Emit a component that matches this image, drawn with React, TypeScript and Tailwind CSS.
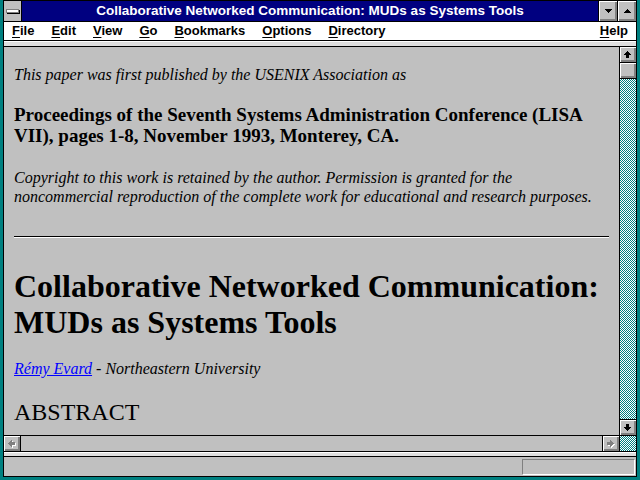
const ARROW = 'M3 0h1v1h1v1h1v1h1v1h-2v3h-3v-3h-2v-1h1v-1h1v-1h1z';
const TRI_DOWN = 'M0 0h7v1h-1v1h-1v1h-1v1h-1v-1h-1v-1h-1v-1h-1z';

const bevel = 'bg-[#c0c0c0] shadow-[inset_1px_1px_0_#ffffff,inset_-1px_-1px_0_#808080,inset_-2px_-2px_0_#808080]';

function Dither({ id }: { id: string }) {
  return (
    <svg width="100%" height="100%" shapeRendering="crispEdges" className="block">
      <defs>
        <pattern id={id} width="2" height="2" patternUnits="userSpaceOnUse">
          <rect width="2" height="2" fill="#008080" />
          <rect width="1" height="1" fill="#ffffff" />
          <rect x="1" y="1" width="1" height="1" fill="#ffffff" />
        </pattern>
      </defs>
      <rect width="100%" height="100%" fill={`url(#${id})`} />
    </svg>
  );
}

function Arrow({ dir, disabled }: { dir: 'up' | 'down' | 'left' | 'right'; disabled?: boolean }) {
  const rot = { up: 0, down: 180, left: 270, right: 90 }[dir];
  return (
    <svg width="8" height="8" viewBox="0 0 8 8" shapeRendering="crispEdges">
      {disabled && (
        <g transform="translate(1 1)">
          <path d={ARROW} fill="#ffffff" transform={`rotate(${rot} 3.5 3.5)`} />
        </g>
      )}
      <path d={ARROW} fill={disabled ? '#808080' : '#000000'} transform={`rotate(${rot} 3.5 3.5)`} />
    </svg>
  );
}

function ScrollButton({ dir, disabled, className = '' }: { dir: 'up' | 'down' | 'left' | 'right'; disabled?: boolean; className?: string }) {
  return (
    <div className={`${bevel} flex items-center justify-center shrink-0 ${className}`}>
      <Arrow dir={dir} disabled={disabled} />
    </div>
  );
}

function MenuItem({ first, rest }: { first: string; rest: string }) {
  return (
    <span className="px-2">
      <span className="underline underline-offset-2">{first}</span>
      {rest}
    </span>
  );
}

export default function App() {
  return (
    <div className="w-[640px] h-[480px] bg-[#008080] px-[3px] pb-[3px] font-['Liberation_Sans',Arial,sans-serif]">
      <div className="h-full flex flex-col border border-black bg-[#c0c0c0]">
        {/* Title bar */}
        <div className="h-[21px] shrink-0 flex border-b border-black">
          <div className="w-[18px] border-r border-black bg-[#c0c0c0] flex items-center justify-center">
            <div className="w-[13px] h-[4px] bg-white border border-[#808080] shadow-[1px_1px_0_#000]" />
          </div>
          <div className="flex-1 bg-[#000080] text-white font-bold text-[13.5px] flex items-center justify-center">
            Collaborative Networked Communication: MUDs as Systems Tools
          </div>
          <div className="w-[19px] border-l border-black">
            <div className={`${bevel} h-full flex items-center justify-center`}>
              <svg width="7" height="4" viewBox="0 0 7 4" shapeRendering="crispEdges">
                <path d={TRI_DOWN} fill="#000" />
              </svg>
            </div>
          </div>
          <div className="w-[19px] border-l border-black">
            <div className={`${bevel} h-full flex items-center justify-center`}>
              <svg width="7" height="4" viewBox="0 0 7 4" shapeRendering="crispEdges">
                <path d={TRI_DOWN} fill="#000" transform="rotate(180 3.5 2)" />
              </svg>
            </div>
          </div>
        </div>

        {/* Menu bar */}
        <div className="h-[19px] shrink-0 bg-white border-b border-black flex items-center text-[13px] font-bold text-black">
          <div className="flex gap-px">
            <MenuItem first="F" rest="ile" />
            <MenuItem first="E" rest="dit" />
            <MenuItem first="V" rest="iew" />
            <MenuItem first="G" rest="o" />
            <MenuItem first="B" rest="ookmarks" />
            <MenuItem first="O" rest="ptions" />
            <MenuItem first="D" rest="irectory" />
          </div>
          <span className="flex-1" />
          <MenuItem first="H" rest="elp" />
        </div>

        <div className="h-[6px] shrink-0 bg-[#dfdfdf] border-t border-t-white border-b border-b-black" />

        {/* Document + vertical scrollbar */}
        <div className="flex-1 min-h-0 flex">
          <div className="flex-1 overflow-hidden bg-[#c0c0c0] px-[10px] pt-[18px] text-black font-['Liberation_Serif','Times_New_Roman',serif]">
            <p className="italic text-[16px] leading-[19px]">
              This paper was first published by the USENIX Association as
            </p>
            <p className="mt-[20px] font-bold text-[19px] leading-[21px]">
              Proceedings of the Seventh Systems Administration Conference (LISA
              <br />
              VII), pages 1-8, November 1993, Monterey, CA.
            </p>
            <p className="mt-[22px] italic text-[16px] leading-[19px]">
              Copyright to this work is retained by the author. Permission is granted for the
              <br />
              noncommercial reproduction of the complete work for educational and research purposes.
            </p>
            <div className="mt-[30px] border-t border-b border-t-black border-b-white" />
            <h1 className="mt-[30px] font-bold text-[32px] leading-[36px]">
              Collaborative Networked Communication:
              <br />
              MUDs as Systems Tools
            </h1>
            <p className="mt-[19px] italic text-[16px] leading-[19px]">
              <span className="text-[#0000ff] underline">Rémy Evard</span> - Northeastern University
            </p>
            <h2 className="mt-[20px] text-[24px] leading-[28px]">ABSTRACT</h2>
          </div>

          <div className="w-[17px] shrink-0 border-l border-black flex flex-col">
            <ScrollButton dir="up" className="h-[15px]" />
            <div className="h-[17px] shrink-0 border-t border-b border-black">
              <div className={`${bevel} h-full`} />
            </div>
            <div className="flex-1 min-h-0 overflow-hidden">
              <Dither id="vtrack" />
            </div>
            <div className="border-t border-black shrink-0">
              <ScrollButton dir="down" className="h-[15px]" />
            </div>
          </div>
        </div>

        {/* Horizontal scrollbar */}
        <div className="h-[17px] shrink-0 flex border-t border-b border-black">
          <ScrollButton dir="left" disabled className="w-[17px] border-r border-black" />
          <div className="flex-1 bg-[#c0c0c0]" />
          <div className="w-[17px] shrink-0 border-l border-black">
            <ScrollButton dir="right" disabled className="h-full" />
          </div>
          <div className="w-[17px] shrink-0 border-l border-black overflow-hidden">
            <Dither id="corner" />
          </div>
        </div>

        <div className="h-[5px] shrink-0 bg-[#dfdfdf] border-t border-t-white border-b border-b-black" />

        {/* Status bar */}
        <div className="h-[19px] shrink-0 flex justify-end pt-[2px] pr-[1px]">
          <div className="w-[113px] h-[16px] border-t border-l border-[#808080] border-b border-r border-b-white border-r-white" />
        </div>
      </div>
    </div>
  );
}
